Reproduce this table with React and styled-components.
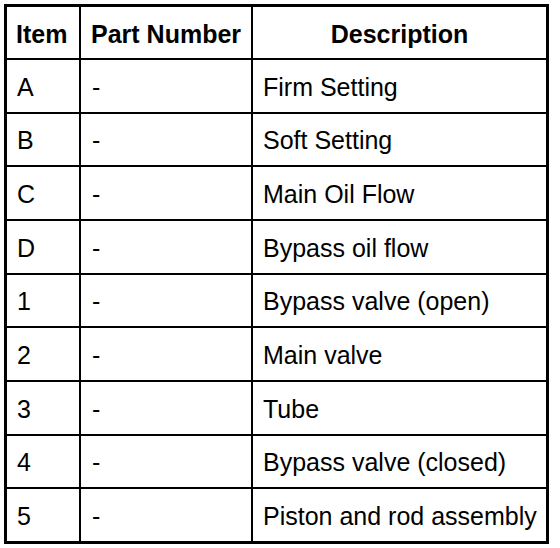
import styled, { createGlobalStyle } from 'styled-components'

const GlobalStyle = createGlobalStyle`
  html, body {
    margin: 0;
    padding: 0;
    background: #ffffff;
  }
  body {
    font-family: 'Liberation Sans', Arial, Helvetica, sans-serif;
    color: #000000;
  }
`

const Page = styled.div`
  padding: 4px 0 0 4px;
`

/* grid on a black ground: the gaps are the rules, the border is the frame */
const Table = styled.div`
  box-sizing: border-box;
  display: grid;
  grid-template-columns: 72px 170px 293px;
  grid-template-rows: 51px repeat(9, 1fr);
  gap: 2px;
  width: 545px;
  height: 540px;
  border: 3px solid #000;
  background: #000;
`

const Cell = styled.div`
  display: flex;
  align-items: center;
  justify-content: ${(p) => (p.$center ? 'center' : 'flex-start')};
  padding: 3px 0 0 ${(p) => (p.$center ? '0' : p.$pad ?? '10px')};
  background: #fff;
  font-size: 25px;
  font-weight: ${(p) => (p.$head ? 700 : 400)};
  white-space: nowrap;
`

const ROWS = [
  ['A', '-', 'Firm Setting'],
  ['B', '-', 'Soft Setting'],
  ['C', '-', 'Main Oil Flow'],
  ['D', '-', 'Bypass oil flow'],
  ['1', '-', 'Bypass valve (open)'],
  ['2', '-', 'Main valve'],
  ['3', '-', 'Tube'],
  ['4', '-', 'Bypass valve (closed)'],
  ['5', '-', 'Piston and rod assembly'],
]

export default function App() {
  return (
    <Page>
      <GlobalStyle />
      <Table role="table">
        <Cell $head $pad="9px">Item</Cell>
        <Cell $head $pad="10px">Part Number</Cell>
        <Cell $head $center>Description</Cell>
        {ROWS.map(([item, part, desc]) => [
          <Cell key={item + 'i'}>{item}</Cell>,
          <Cell key={item + 'p'} $pad="11px">{part}</Cell>,
          <Cell key={item + 'd'} $pad="10px">{desc}</Cell>,
        ])}
      </Table>
    </Page>
  )
}
